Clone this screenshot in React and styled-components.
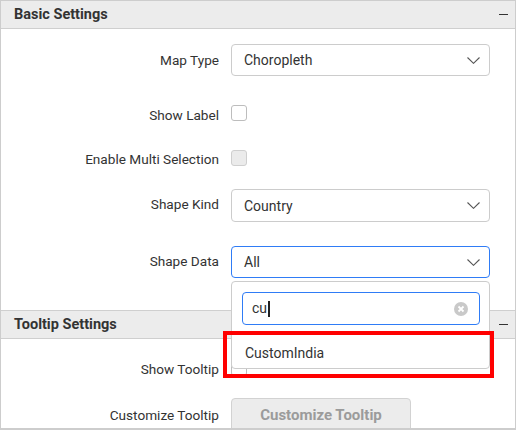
import React from 'react';
import styled, { createGlobalStyle } from 'styled-components';

const GlobalStyle = createGlobalStyle`
  body {
    margin: 0;
    font-family: Roboto, "Liberation Sans", sans-serif;
    background: #fff;
  }
`;

const Panel = styled.div`
  position: relative;
  width: 516px;
  height: 430px;
  box-sizing: border-box;
  border: 1px solid #cdcdcd;
  border-bottom-width: 2px;
  overflow: hidden;
  color: #333;
`;

const SectionHeader = styled.div`
  display: flex;
  align-items: center;
  justify-content: space-between;
  height: 27px;
  padding: 0 7px 0 13px;
  background: #ececec;
  border-bottom: 1px solid #cfcfcf;
  border-top: ${(p) => (p.$top ? '1px solid #cfcfcf' : 'none')};
  margin-top: ${(p) => p.$mt || 0}px;
  font-size: 14.5px;
  font-weight: 700;
  color: #333;
`;

const Collapse = styled.span`
  width: 9px;
  height: 1.5px;
  background: #333;
`;

const Row = styled.div`
  display: flex;
  align-items: center;
  height: ${(p) => p.$h}px;
  margin-top: ${(p) => p.$mt}px;
`;

const Label = styled.div`
  width: 218px;
  padding-right: 12px;
  box-sizing: content-box;
  text-align: right;
  font-size: 13.6px;
  color: #333;
  margin-top: ${(p) => p.$shift || 0}px;
`;

const Dropdown = styled.div`
  display: flex;
  align-items: center;
  justify-content: space-between;
  width: 259px;
  height: 100%;
  box-sizing: border-box;
  padding: 0 8px 0 12px;
  border: 1px solid ${(p) => (p.$focus ? '#2f7cf6' : '#cccccc')};
  border-radius: 4px;
  font-size: 14px;
  color: #333;
  background: #fff;
`;

const Checkbox = styled.span`
  width: 16px;
  height: 16px;
  box-sizing: border-box;
  border: 1px solid ${(p) => (p.$disabled ? '#cfcfcf' : '#bdbdbd')};
  background: ${(p) => (p.$disabled ? '#ebebeb' : '#fff')};
  border-radius: 3px;
`;

const Button = styled.div`
  display: flex;
  align-items: center;
  justify-content: center;
  width: 180px;
  height: 34px;
  box-sizing: border-box;
  background: #ececec;
  border: 1px solid #d2d2d2;
  border-radius: 4px;
  color: #9b9b9b;
  font-size: 15px;
  font-weight: 700;
`;

const Popup = styled.div`
  position: absolute;
  left: 230px;
  top: 280px;
  width: 259px;
  height: 88px;
  box-sizing: border-box;
  background: #fff;
  border: 1px solid #cccccc;
  border-radius: 4px;
  padding: 10px 9px 0 10px;
`;

const SearchBox = styled.div`
  display: flex;
  align-items: center;
  justify-content: space-between;
  height: 33px;
  box-sizing: border-box;
  border: 1px solid #2f7cf6;
  border-radius: 4px;
  padding: 0 11px 0 9px;
  font-size: 14px;
  color: #333;
`;

const Caret = styled.span`
  display: inline-block;
  width: 1.5px;
  height: 16px;
  background: #222;
  vertical-align: middle;
  margin-left: 1px;
`;

const Item = styled.div`
  height: 30px;
  display: flex;
  align-items: center;
  padding-left: 3px;
  margin-top: 13px;
  font-size: 14px;
  color: #333;
`;

const Highlight = styled.div`
  position: absolute;
  left: 222px;
  top: 330px;
  width: 271px;
  height: 47px;
  box-sizing: border-box;
  border: 4px solid #ff0000;
`;

const Chevron = () => (
  <svg width="13" height="7" viewBox="0 0 13 7" style={{ marginRight: 1 }}>
    <path d="M0.5 0.5 L6.5 6.3 L12.5 0.5" fill="none" stroke="#555" strokeWidth="1.1" />
  </svg>
);

const ClearIcon = () => (
  <svg width="14" height="14" viewBox="0 0 14 14">
    <circle cx="7" cy="7" r="7" fill="#c9c9c9" />
    <path d="M4.5 4.5 L9.5 9.5 M9.5 4.5 L4.5 9.5" stroke="#fff" strokeWidth="1.8" />
  </svg>
);

export default function App() {
  return (
    <>
      <GlobalStyle />
      <Panel>
        <SectionHeader>
          Basic Settings
          <Collapse />
        </SectionHeader>

        <Row $h={32} $mt={15}>
          <Label>Map Type</Label>
          <Dropdown>
            Choropleth
            <Chevron />
          </Dropdown>
        </Row>

        <Row $h={16} $mt={29}>
          <Label $shift={3}>Show Label</Label>
          <Checkbox />
        </Row>

        <Row $h={16} $mt={29}>
          <Label $shift={2}>Enable Multi Selection</Label>
          <Checkbox $disabled />
        </Row>

        <Row $h={33} $mt={23}>
          <Label $shift={-3}>Shape Kind</Label>
          <Dropdown>
            Country
            <Chevron />
          </Dropdown>
        </Row>

        <Row $h={32} $mt={24}>
          <Label $shift={-2}>Shape Data</Label>
          <Dropdown $focus>
            All
            <Chevron />
          </Dropdown>
        </Row>

        <SectionHeader $top $mt={32}>
          Tooltip Settings
          <Collapse />
        </SectionHeader>

        <Row $h={16} $mt={21}>
          <Label $shift={1}>Show Tooltip</Label>
          <Checkbox />
        </Row>

        <Row $h={34} $mt={22}>
          <Label>Customize Tooltip</Label>
          <Button>Customize Tooltip</Button>
        </Row>

        <Popup>
          <SearchBox>
            <span>
              cu
              <Caret />
            </span>
            <ClearIcon />
          </SearchBox>
          <Item>CustomIndia</Item>
        </Popup>

        <Highlight />
      </Panel>
    </>
  );
}
